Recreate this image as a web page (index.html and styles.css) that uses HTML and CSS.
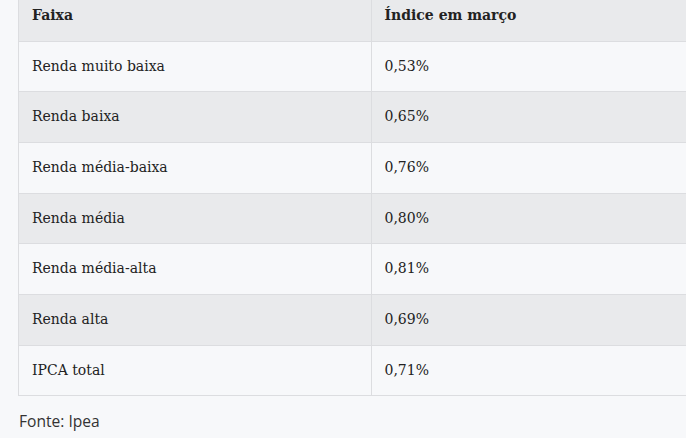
FILE: index.html
```html
<!DOCTYPE html>
<html lang="pt-BR">
<head>
<meta charset="utf-8">
<link rel="stylesheet" href="styles.css">
</head>
<body>
<div class="page">
  <div class="table-wrap">
    <table class="data">
      <thead>
        <tr><th>Faixa</th><th>Índice em março</th></tr>
      </thead>
      <tbody>
        <tr><td>Renda muito baixa</td><td>0,53%</td></tr>
        <tr><td>Renda baixa</td><td>0,65%</td></tr>
        <tr><td>Renda média-baixa</td><td>0,76%</td></tr>
        <tr><td>Renda média</td><td>0,80%</td></tr>
        <tr><td>Renda média-alta</td><td>0,81%</td></tr>
        <tr><td>Renda alta</td><td>0,69%</td></tr>
        <tr><td>IPCA total</td><td>0,71%</td></tr>
      </tbody>
    </table>
  </div>
  <p class="source">Fonte: Ipea</p>
</div>
</body>
</html>
```

FILE: styles.css
```css
html, body {
  margin: 0;
  padding: 0;
  background: #f7f8fa;
  overflow: hidden;
}
.page {
  padding-left: 18px;
  margin-top: -10px;
}
.table-wrap {
  overflow: hidden;
}
.data {
  border-collapse: collapse;
  width: 706px;
  table-layout: fixed;
  font-family: "DejaVu Serif", "Liberation Serif", serif;
  font-size: 14px;
  color: #222;
}
.data th, .data td {
  border: 1px solid #dcdde0;
  padding: 12px 13px;
  line-height: 25.65px;
  text-align: left;
  font-weight: normal;
}
.data th {
  font-weight: bold;
  background: #e9eaec;
}
.data tbody tr:nth-child(odd) td {
  background: #f7f8fa;
}
.data tbody tr:nth-child(even) td {
  background: #e9eaec;
}
.source {
  margin: 14px 0 0 1px;
  font-family: "Open Sans", sans-serif;
  font-size: 15.6px;
  color: #333;
}
```
